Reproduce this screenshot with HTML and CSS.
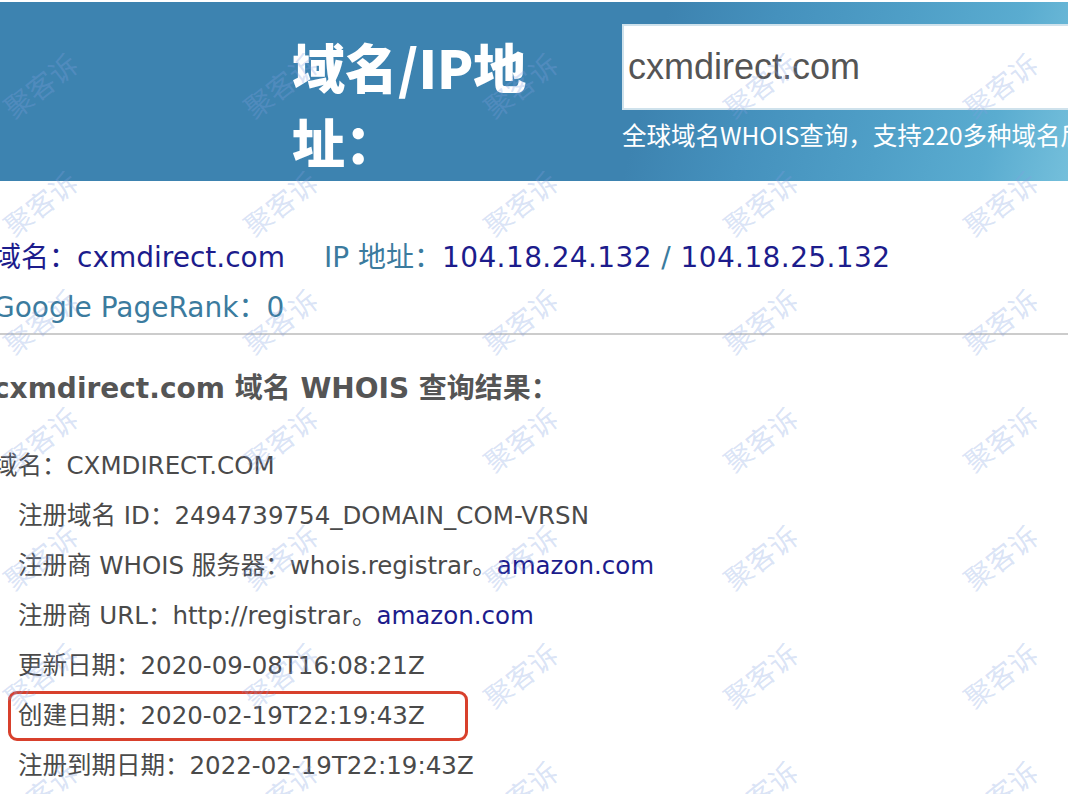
FILE: index.html
```html
<!DOCTYPE html>
<html lang="zh-CN">
<head>
    <meta charset="UTF-8">
    <meta name="viewport" content="width=device-width, initial-scale=1.0">
    <title>cxmdirect.com 域名 WHOIS 查询</title>
    <link rel="stylesheet" href="styles.css">
</head>
<body>

    <div class="page">
        <!-- 查询栏 -->
        <header class="search-bar">
            <div class="search-title">域名/IP地址：</div>
            <div class="search-box">
                <input class="search-input" type="text" value="cxmdirect.com">
                <p class="search-tip">全球域名WHOIS查询，支持220多种域名后缀</p>
            </div>
        </header>

        <!-- 查询结果 -->
        <main class="result">
            <div class="summary">
                <div class="summary-line">
                    <span class="label-dark">域名：</span><a href="#" class="link">cxmdirect.com</a>
                    <span class="ip-label">IP 地址：</span><span class="ip"><a href="#" class="link">104.18.24.132</a><span class="muted"> / </span><a href="#" class="link">104.18.25.132</a></span>
                </div>
                <div class="summary-line muted">Google PageRank：0</div>
            </div>

            <h2 class="whois-title">cxmdirect.com 域名 WHOIS 查询结果：</h2>

            <div class="whois">
                <div class="whois-line">域名：CXMDIRECT.COM</div>
                <ul class="whois-list">
                    <li>注册域名 ID：2494739754_DOMAIN_COM-VRSN</li>
                    <li>注册商 WHOIS 服务器：whois.registrar。<a href="#" class="link">amazon.com</a></li>
                    <li>注册商 URL：http://registrar。<a href="#" class="link">amazon.com</a></li>
                    <li>更新日期：2020-09-08T16:08:21Z</li>
                    <li><span class="marked">创建日期：2020-02-19T22:19:43Z</span></li>
                    <li>注册到期日期：2022-02-19T22:19:43Z</li>
                </ul>
            </div>
        </main>

        <!-- 水印 -->
        <div class="watermark">
            <span>聚客诉</span><span>聚客诉</span><span>聚客诉</span><span>聚客诉</span><span>聚客诉</span>
            <span>聚客诉</span><span>聚客诉</span><span>聚客诉</span><span>聚客诉</span><span>聚客诉</span>
            <span>聚客诉</span><span>聚客诉</span><span>聚客诉</span><span>聚客诉</span><span>聚客诉</span>
            <span>聚客诉</span><span>聚客诉</span><span>聚客诉</span><span>聚客诉</span><span>聚客诉</span>
            <span>聚客诉</span><span>聚客诉</span><span>聚客诉</span><span>聚客诉</span><span>聚客诉</span>
            <span>聚客诉</span><span>聚客诉</span><span>聚客诉</span><span>聚客诉</span><span>聚客诉</span>
            <span>聚客诉</span><span>聚客诉</span><span>聚客诉</span><span>聚客诉</span><span>聚客诉</span>
        </div>
    </div>

</body>
</html>
```

FILE: styles.css
```css
/* 基础 */
body, html {
    margin: 0;
    padding: 0;
    background-color: white;
    font-family: 'DejaVu Sans', 'Noto Sans CJK SC', sans-serif;
    color: #4a4a4a;
    overflow: hidden;
}

.page {
    position: relative;
    height: 794px;
    padding-top: 2px;
    box-sizing: border-box;
    overflow: hidden;
}

a {
    text-decoration: none;
}

/* 查询栏 */
.search-bar {
    display: flex;
    height: 179px;
    padding-left: 292px;
    background: linear-gradient(105deg, #3d83b0 0%, #3d83b0 60%, #4591bd 70%, #4f9fc7 82%, #5aacd0 92%, #74bfdb 100%);
}

.search-title {
    flex-shrink: 0;
    width: 250px;
    margin-right: 80px;
    padding-top: 27px;
    font-family: 'Noto Sans CJK SC', sans-serif;
    font-size: 53px;
    font-weight: 900;
    line-height: 75px;
    color: white;
    word-break: break-all;
}

.search-box {
    flex-shrink: 0;
    padding-top: 22px;
}

.search-input {
    display: block;
    width: 470px;
    height: 86px;
    margin: 0;
    padding: 0 4px;
    border: 2px solid #cfe2ec;
    box-sizing: border-box;
    font-family: 'Liberation Sans', Arial, sans-serif;
    font-size: 36px;
    color: #555;
    background-color: white;
    outline: none;
}

.search-tip {
    margin: 7px 0 0;
    font-family: 'Noto Sans CJK SC', sans-serif;
    font-size: 24.5px;
    color: white;
    white-space: nowrap;
}

/* 查询结果 */
.result {
    margin-left: -7px;
}

.summary {
    padding-top: 52px;
    border-bottom: 2px solid #cccccc;
    font-size: 28px;
    line-height: 50px;
}

.summary-line {
    white-space: nowrap;
}

.label-dark,
.link {
    color: #1c1c8c;
}

.ip-label {
    margin-left: 30px;
    color: #3b7b9e;
}

.ip {
    letter-spacing: 0.4px;
}

.muted {
    color: #3b7b9e;
}

.whois-title {
    margin: 29px 0 0;
    font-size: 28px;
    font-weight: 700;
    line-height: 50px;
    color: #555;
    white-space: nowrap;
}

.whois {
    margin-top: 27px;
    font-size: 24.5px;
    line-height: 50px;
}

.whois-list {
    list-style: none;
    margin: 0;
    padding: 0 0 0 25px;
}

.whois-list li {
    white-space: nowrap;
}

.marked {
    display: inline-block;
    margin-left: -10px;
    padding: 0 40px 0 7px;
    line-height: 44px;
    border: 3px solid #d8402c;
    border-radius: 9px;
}

/* 水印 */
.watermark {
    position: absolute;
    top: 26px;
    left: -80px;
    display: grid;
    grid-template-columns: repeat(5, 240px);
    grid-auto-rows: 118px;
    pointer-events: none;
}

.watermark span {
    display: flex;
    align-items: center;
    justify-content: center;
    font-family: 'Noto Sans CJK SC', sans-serif;
    font-size: 28px;
    color: rgba(130, 160, 225, 0.3);
    transform: rotate(-38deg);
}
```
